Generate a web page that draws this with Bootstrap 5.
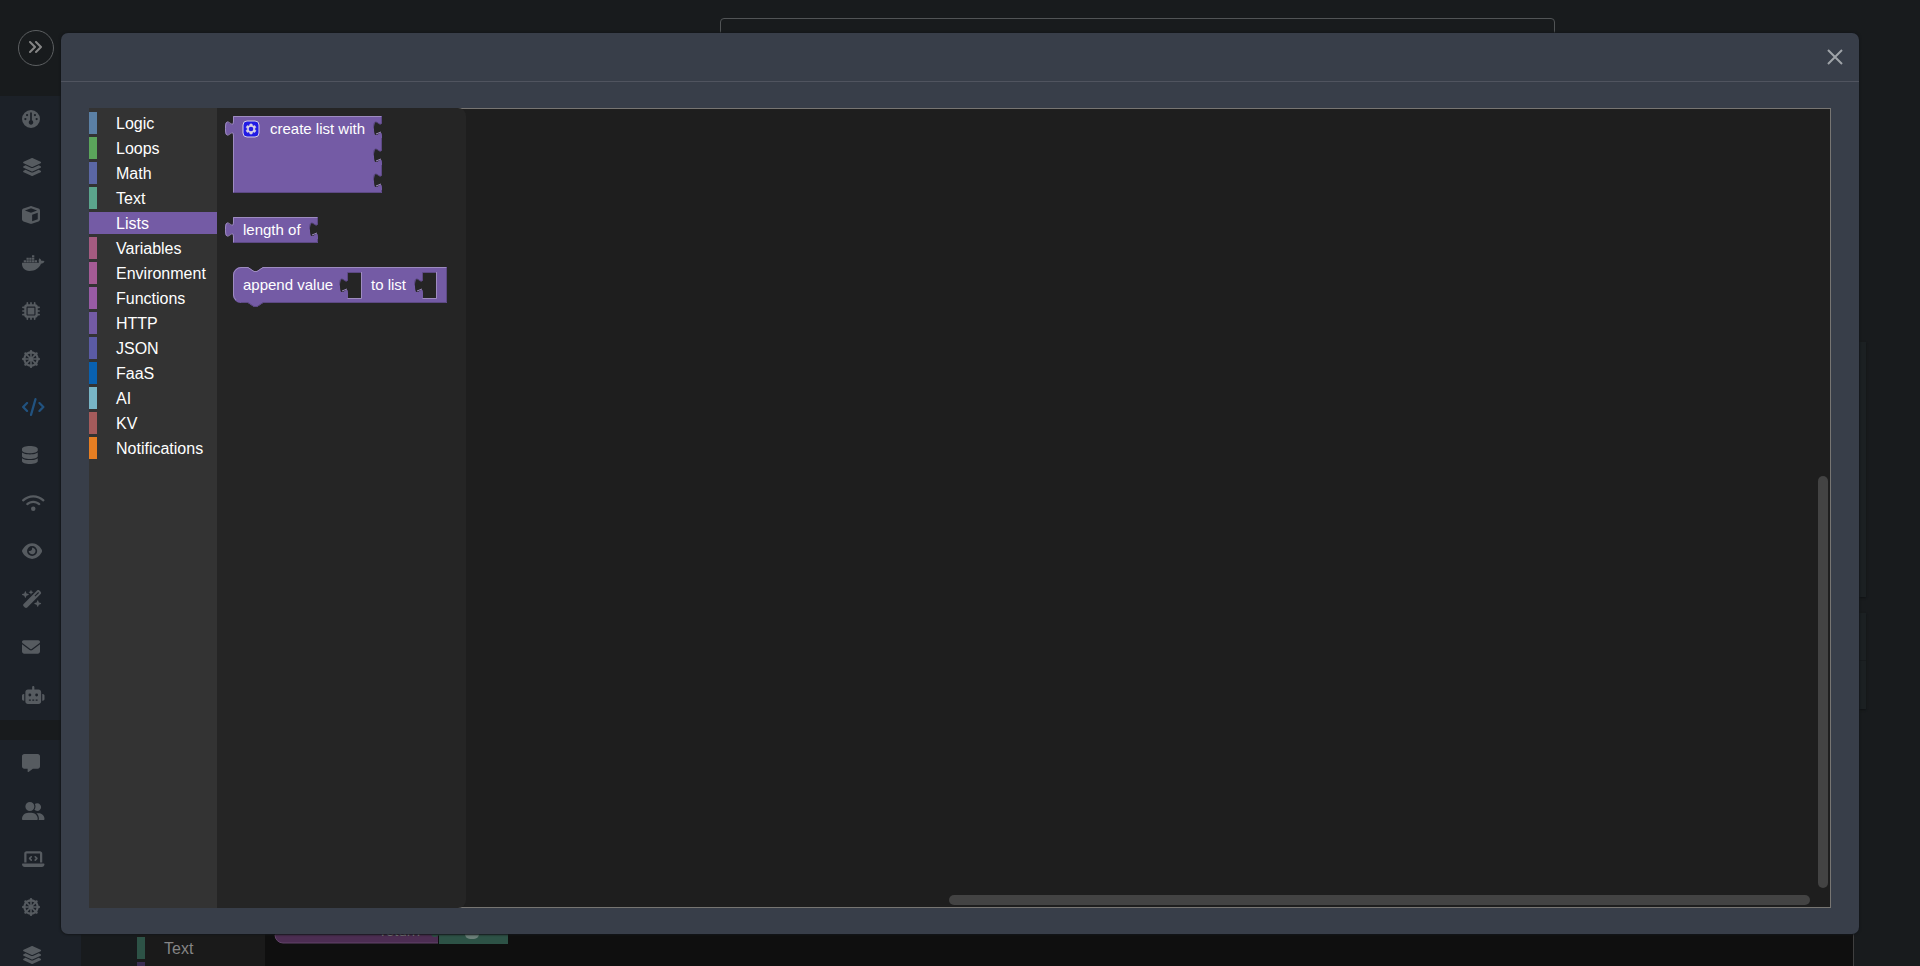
<!DOCTYPE html>
<html lang="en">
<head>
<meta charset="utf-8">
<meta name="viewport" content="width=device-width, initial-scale=1">
<title>Function editor</title>
<link href="https://cdn.jsdelivr.net/npm/bootstrap@5.3.0/dist/css/bootstrap.min.css" rel="stylesheet">
<style>
  body { font-family: "Liberation Sans", Arial, sans-serif; background: #181b1d; color: #fff; }
  .shell { height: 100vh; overflow: hidden; }
  .side { width: 81px; }
  .side-top { height: 96px; padding: 30px 18px; }
  .side-toggle { width: 36px; height: 36px; border: 1px solid #5c5f61; color: #858585; }
  .side-group { background: #1c2128; }
  .side-group.lower { margin-top: 20px; }
  .side-link { height: 48px; padding: 0 22px 2px; color: #565b60; }
  .side-link svg { height: 18px; fill: currentColor; }
  .side-link.active { color: #21527f; }
  .search-box { height: 40px; width: 43.5vw; margin: 18px 19vw 0 auto; background: transparent; border: 1px solid #515456; border-radius: 4px; }
  .back-panel { background: #1b2022; margin-right: 54px; box-shadow: 0 1px 2px #101314; }
  .back-panel.first { height: 255px; margin-top: 284px; }
  .back-panel.second { height: 96px; margin-top: 16px; }
  .back-panel.second hr { margin: 47px 0 0; border-color: #171b1d; opacity: 1; }
  .back-editor { margin: auto 66px 0 56px; height: 33px; border-right: 1px solid #3f3f3f; background: #0f0f0f; }
  .tool-cats { width: 128px; padding-top: 4px; background: #333; }
  .back-editor .tool-cats { background: #1a1a1a; color: #858585; }
  .cat { height: 22px; line-height: 24px; margin-bottom: 3px; padding-left: 19px; border-left: 8px solid var(--hue); font-size: 16px; color: inherit; text-decoration: none; white-space: nowrap; }
  .cat.selected { background: var(--hue); }
  .big-dialog { max-width: none; margin: 33px 61px 32px; height: calc(100vh - 65px); }
  .big-dialog .modal-content { height: 100%; background: #383e49; border: 0; border-radius: 7px; box-shadow: 0 0 2px 1px #14171a; }
  .big-dialog .modal-header { height: 49px; padding: 0 16px; border-bottom: 1px solid #50545f; }
  .close-x { width: 16px; height: 16px; color: #9fa3a8; }
  .big-dialog .modal-body { padding: 26px 28px; }
  .workspace { height: 100%; background: #1e1e1e; box-shadow: inset 0 0 0 1px #777572; }
  .flyout { width: 249px; padding: 8px; gap: 24px; background: #252525; border-radius: 0 8px 8px 0; }
  .flyout svg { overflow: visible; }
  .blk { fill: #745ba5; }
  .hi { fill: none; stroke: #9e8cc0; }
  .lo { fill: none; stroke: #5d4984; }
  .blk-text { font-size: 15px; fill: #fff; }
  .blk-hole { fill: #252525; }
  .bar-v, .bar-h { background: #434343; border-radius: 5px; }
  .bar-v { width: 10px; height: 51.5%; right: 3px; bottom: 20px; }
  .bar-h { height: 10px; width: 49.4%; right: 21px; bottom: 3px; }
</style>
</head>
<body>
<svg class="d-none" aria-hidden="true">
  <symbol id="i-wheel" viewBox="0 0 512 512">
    <g fill="none" stroke="currentColor">
      <circle cx="256" cy="256" r="188" stroke-width="60"/>
      <path stroke-width="44" d="M256 80v352M80 256h352M132 132l248 248M380 132L132 380"/>
      <path stroke-width="72" stroke-linecap="round" d="M256 36v20M256 456v20M36 256h20M456 256h20M100 100l14 14M398 398l14 14M412 100l-14 14M114 398l-14 14"/>
    </g>
    <circle cx="256" cy="256" r="60"/>
  </symbol>
  <symbol id="i-layers" viewBox="0 0 576 512"><path d="M264.5 5.2c14.9-6.9 32.1-6.9 47 0l218.6 101c8.5 3.9 13.9 12.4 13.9 21.8s-5.4 17.9-13.9 21.8l-218.6 101c-14.9 6.9-32.1 6.9-47 0L45.9 149.8C37.4 145.8 32 137.3 32 128s5.4-17.9 13.9-21.8L264.5 5.2zM476.9 209.6l53.2 24.6c8.5 3.9 13.9 12.4 13.9 21.8s-5.4 17.9-13.9 21.8l-218.6 101c-14.9 6.9-32.1 6.9-47 0L45.9 277.8C37.4 273.8 32 265.3 32 256s5.4-17.9 13.9-21.8l53.2-24.6 152 70.2c23.4 10.8 50.4 10.8 73.8 0l152-70.2zm-152 198.2l152-70.2 53.2 24.6c8.5 3.9 13.9 12.4 13.9 21.8s-5.4 17.9-13.9 21.8l-218.6 101c-14.9 6.9-32.1 6.9-47 0L45.9 405.8C37.4 401.8 32 393.3 32 384s5.4-17.9 13.9-21.8l53.2-24.6 152 70.2c23.4 10.8 50.4 10.8 73.8 0z"/></symbol>
</svg>

<div class="shell d-flex">
  <aside class="side d-flex flex-column flex-shrink-0">
    <div class="side-top">
      <button type="button" class="side-toggle btn p-0 rounded-circle d-flex align-items-center justify-content-center" aria-label="Expand sidebar">
        <svg width="14" height="14" viewBox="0 0 14 14" fill="none" stroke="currentColor" stroke-width="2" stroke-linecap="round" stroke-linejoin="round"><path d="M1 1l5 5-5 5M7 1l5 5-5 5"/></svg>
      </button>
    </div>
    <nav class="side-group nav flex-column flex-nowrap mb-0" aria-label="Services">
      <a href="#" class="side-link d-flex align-items-center" aria-label="Dashboard"><svg viewBox="0 0 512 512"><path d="M0 256a256 256 0 1 1 512 0A256 256 0 1 1 0 256zm320 96c0-26.9-16.5-49.9-40-59.3V88c0-13.3-10.7-24-24-24s-24 10.7-24 24V292.7c-23.5 9.5-40 32.5-40 59.3c0 35.3 28.7 64 64 64s64-28.7 64-64zM144 176a32 32 0 1 0 0-64 32 32 0 1 0 0 64zm-16 80a32 32 0 1 0 -64 0 32 32 0 1 0 64 0zm288 32a32 32 0 1 0 0-64 32 32 0 1 0 0 64zM400 144a32 32 0 1 0 -64 0 32 32 0 1 0 64 0z"/></svg></a>
      <a href="#" class="side-link d-flex align-items-center" aria-label="Stacks"><svg viewBox="0 0 576 512"><use href="#i-layers"/></svg></a>
      <a href="#" class="side-link d-flex align-items-center" aria-label="Packages"><svg viewBox="0 0 512 512"><path d="M234.5 5.7c13.9-5 29.1-5 43.1 0l192 68.6C495 83.4 512 107.5 512 134.6V377.4c0 27-17 51.2-42.5 60.3l-192 68.6c-13.9 5-29.1 5-43.1 0l-192-68.6C17 428.6 0 404.5 0 377.4V134.6c0-27 17-51.2 42.5-60.3l192-68.6zM256 66L82.3 128 256 190l173.7-62L256 66zm32 368.6l160-57.1v-188L288 246.6v188z"/></svg></a>
      <a href="#" class="side-link d-flex align-items-center" aria-label="Containers"><svg viewBox="0 0 640 512"><path d="M349.9 236.3h-66.1v-59.4h66.1v59.4zm0-204.3h-66.1v60.7h66.1V32zm78.2 144.8H362v59.4h66.1v-59.4zm-156.3-72.1h-66.1v60.1h66.1v-60.1zm78.1 0h-66.1v60.1h66.1v-60.1zm276.8 100c-14.4-9.7-47.6-13.2-73.1-8.4-3.3-24-16.7-44.9-41.1-63.7l-14-9.3-9.3 14c-18.4 27.8-23.4 73.6-3.7 103.8-8.7 4.7-25.8 11.1-48.4 10.7H2.4c-8.7 50.8 5.8 116.8 44 162.1 37.1 43.9 92.7 66.2 165.4 66.2 157.4 0 273.9-72.5 328.4-204.2 21.4.4 67.6.1 91.3-45.2 1.5-2.5 6.6-13.2 8.5-17.1l-13.3-8.9zm-511.1-27.9h-66v59.4h66.1v-59.4zm78.1 0h-66.1v59.4h66.1v-59.4zm78.1 0h-66.1v59.4h66.1v-59.4zm-78.1-72.1h-66.1v60.1h66.1v-60.1z"/></svg></a>
      <a href="#" class="side-link d-flex align-items-center" aria-label="Compute"><svg viewBox="0 0 512 512"><path d="M176 24c0-13.3-10.7-24-24-24s-24 10.7-24 24V64c-35.3 0-64 28.7-64 64H24c-13.3 0-24 10.7-24 24s10.7 24 24 24H64v56H24c-13.3 0-24 10.7-24 24s10.7 24 24 24H64v56H24c-13.3 0-24 10.7-24 24s10.7 24 24 24H64c0 35.3 28.7 64 64 64v40c0 13.3 10.7 24 24 24s24-10.7 24-24V448h56v40c0 13.3 10.7 24 24 24s24-10.7 24-24V448h56v40c0 13.3 10.7 24 24 24s24-10.7 24-24V448c35.3 0 64-28.7 64-64h40c13.3 0 24-10.7 24-24s-10.7-24-24-24H448V280h40c13.3 0 24-10.7 24-24s-10.7-24-24-24H448V176h40c13.3 0 24-10.7 24-24s-10.7-24-24-24H448c0-35.3-28.7-64-64-64V24c0-13.3-10.7-24-24-24s-24 10.7-24 24V64H280V24c0-13.3-10.7-24-24-24s-24 10.7-24 24V64H176V24zM160 128H352c17.7 0 32 14.3 32 32V352c0 17.7-14.3 32-32 32H160c-17.7 0-32-14.3-32-32V160c0-17.7 14.3-32 32-32zm192 32H160V352H352V160z"/></svg></a>
      <a href="#" class="side-link d-flex align-items-center" aria-label="Clusters"><svg viewBox="0 0 512 512"><use href="#i-wheel"/></svg></a>
      <a href="#" class="side-link active d-flex align-items-center" aria-label="Functions" aria-current="page"><svg viewBox="0 0 640 512"><path d="M392.8 1.2c-17-4.9-34.7 5-39.6 22l-128 448c-4.9 17 5 34.7 22 39.6s34.7-5 39.6-22l128-448c4.9-17-5-34.7-22-39.6zm80.6 120.1c-12.5 12.5-12.5 32.8 0 45.3L562.7 256l-89.4 89.4c-12.5 12.5-12.5 32.8 0 45.3s32.8 12.5 45.3 0l112-112c12.5-12.5 12.5-32.8 0-45.3l-112-112c-12.5-12.5-32.8-12.5-45.3 0zm-306.7 0c-12.5-12.5-32.8-12.5-45.3 0l-112 112c-12.5 12.5-12.5 32.8 0 45.3l112 112c12.5 12.5 32.8 12.5 45.3 0s12.5-32.8 0-45.3L77.3 256l89.4-89.4c12.5-12.5 12.5-32.8 0-45.3z"/></svg></a>
      <a href="#" class="side-link d-flex align-items-center" aria-label="Databases"><svg viewBox="0 0 448 512"><path d="M448 80v48c0 44.2-100.3 80-224 80S0 172.2 0 128V80C0 35.8 100.3 0 224 0S448 35.8 448 80zM393.2 214.7c20.8-7.4 39.9-16.9 54.8-28.6V288c0 44.2-100.3 80-224 80S0 332.2 0 288V186.1c14.9 11.8 34 21.2 54.8 28.6C99.7 230.7 159.5 240 224 240s124.3-9.3 169.2-25.3zM0 346.1c14.9 11.8 34 21.2 54.8 28.6C99.7 390.7 159.5 400 224 400s124.3-9.3 169.2-25.3c20.8-7.4 39.9-16.9 54.8-28.6V432c0 44.2-100.3 80-224 80S0 476.2 0 432V346.1z"/></svg></a>
      <a href="#" class="side-link d-flex align-items-center" aria-label="Network"><svg viewBox="0 0 640 512"><path d="M54.2 202.9C123.2 136.7 216.8 96 320 96s196.8 40.7 265.8 106.9c12.8 12.2 33 11.8 45.2-.9s11.8-33-.9-45.2C549.7 79.5 440.4 32 320 32S90.3 79.5 9.8 156.7C-2.9 169-3.3 189.2 8.9 202s32.5 13.2 45.2 .9zM320 256c56.8 0 108.6 21.1 148.2 56c13.3 11.7 33.5 10.4 45.2-2.8s10.4-33.5-2.8-45.2C459.8 219.2 393 192 320 192s-139.8 27.2-190.5 72c-13.3 11.7-14.5 31.9-2.8 45.2s31.9 14.5 45.2 2.8c39.5-34.9 91.3-56 148.2-56zm64 160a64 64 0 1 0 -128 0 64 64 0 1 0 128 0z"/></svg></a>
      <a href="#" class="side-link d-flex align-items-center" aria-label="Monitoring"><svg viewBox="0 0 576 512"><path d="M288 32c-80.8 0-145.5 36.8-192.6 80.6C48.6 156 17.3 208 2.5 243.7c-3.3 7.9-3.3 16.7 0 24.6C17.3 304 48.6 356 95.4 399.4C142.5 443.2 207.2 480 288 480s145.5-36.8 192.6-80.6c46.8-43.5 78.1-95.4 93-131.1c3.3-7.9 3.3-16.7 0-24.6c-14.9-35.7-46.2-87.7-93-131.1C433.5 68.8 368.8 32 288 32zM144 256a144 144 0 1 1 288 0 144 144 0 1 1 -288 0zm144-64c0 35.3-28.7 64-64 64c-7.1 0-13.9-1.2-20.3-3.3c-5.5-1.8-11.9 1.6-11.7 7.4c.3 6.9 1.3 13.8 3.2 20.7c13.7 51.2 66.4 81.6 117.6 67.9s81.6-66.4 67.9-117.6c-11.1-41.5-47.8-69.4-88.6-71.1c-5.8-.2-9.2 6.1-7.4 11.7c2.1 6.4 3.3 13.2 3.3 20.3z"/></svg></a>
      <a href="#" class="side-link d-flex align-items-center" aria-label="Automation"><svg viewBox="0 0 576 512"><path d="M234.7 42.7L197 56.8c-3 1.1-5 4-5 7.2s2 6.1 5 7.2l37.7 14.1L248.8 123c1.1 3 4 5 7.2 5s6.1-2 7.2-5l14.1-37.7L315 71.2c3-1.1 5-4 5-7.2s-2-6.1-5-7.2L277.3 42.7 263.2 5c-1.1-3-4-5-7.2-5s-6.1 2-7.2 5L234.7 42.7zM46.1 395.4c-18.7 18.7-18.7 49.1 0 67.9l34.6 34.6c18.7 18.7 49.1 18.7 67.9 0L529.9 116.5c18.7-18.7 18.7-49.1 0-67.9L495.3 14.1c-18.7-18.7-49.1-18.7-67.9 0L46.1 395.4zM484.6 82.6l-105 105-23.3-23.3 105-105 23.3 23.3zM7.5 117.2C3 118.9 0 123.2 0 128s3 9.1 7.5 10.8L64 160l21.2 56.5c1.7 4.5 6 7.5 10.8 7.5s9.1-3 10.8-7.5L128 160l56.5-21.2c4.5-1.7 7.5-6 7.5-10.8s-3-9.1-7.5-10.8L128 96 106.8 39.5C105.1 35 100.8 32 96 32s-9.1 3-10.8 7.5L64 96 7.5 117.2zm352 256c-4.5 1.7-7.5 6-7.5 10.8s3 9.1 7.5 10.8L416 416l21.2 56.5c1.7 4.5 6 7.5 10.8 7.5s9.1-3 10.8-7.5L480 416l56.5-21.2c4.5-1.7 7.5-6 7.5-10.8s-3-9.1-7.5-10.8L480 352l-21.2-56.5c-1.7-4.5-6-7.5-10.8-7.5s-9.1 3-10.8 7.5L416 352l-56.5 21.2z"/></svg></a>
      <a href="#" class="side-link d-flex align-items-center" aria-label="Mail"><svg viewBox="0 0 512 512"><path d="M48 64C21.5 64 0 85.5 0 112c0 15.1 7.1 29.3 19.2 38.4L236.8 313.6c11.4 8.5 27 8.5 38.4 0L492.8 150.4c12.1-9.1 19.2-23.3 19.2-38.4c0-26.5-21.5-48-48-48H48zM0 176V384c0 35.3 28.7 64 64 64H448c35.3 0 64-28.7 64-64V176L294.4 339.2c-22.8 17.1-54 17.1-76.8 0L0 176z"/></svg></a>
      <a href="#" class="side-link d-flex align-items-center" aria-label="Assistants"><svg viewBox="0 0 640 512"><path d="M320 0c17.7 0 32 14.3 32 32V96H472c39.8 0 72 32.2 72 72V440c0 39.8-32.2 72-72 72H168c-39.8 0-72-32.2-72-72V168c0-39.8 32.2-72 72-72H288V32c0-17.7 14.3-32 32-32zM208 384c-8.8 0-16 7.2-16 16s7.2 16 16 16h32c8.8 0 16-7.2 16-16s-7.2-16-16-16H208zm96 0c-8.8 0-16 7.2-16 16s7.2 16 16 16h32c8.8 0 16-7.2 16-16s-7.2-16-16-16H304zm96 0c-8.8 0-16 7.2-16 16s7.2 16 16 16h32c8.8 0 16-7.2 16-16s-7.2-16-16-16H400zM264 256a40 40 0 1 0 -80 0 40 40 0 1 0 80 0zm152 40a40 40 0 1 0 0-80 40 40 0 1 0 0 80zM48 224H64V416H48c-26.5 0-48-21.5-48-48V272c0-26.5 21.5-48 48-48zm544 0c26.5 0 48 21.5 48 48v96c0 26.5-21.5 48-48 48H576V224h16z"/></svg></a>
    </nav>
    <nav class="side-group lower nav flex-column flex-nowrap flex-shrink-0" aria-label="Account">
      <a href="#" class="side-link d-flex align-items-center" aria-label="Messages"><svg viewBox="0 0 512 512"><path d="M64 0C28.7 0 0 28.7 0 64V352c0 35.3 28.7 64 64 64h96v80c0 6.1 3.4 11.6 8.8 14.3s11.9 2.1 16.8-1.5L309.3 416H448c35.3 0 64-28.7 64-64V64c0-35.3-28.7-64-64-64H64z"/></svg></a>
      <a href="#" class="side-link d-flex align-items-center" aria-label="Users"><svg viewBox="0 0 640 512"><path d="M96 128a128 128 0 1 1 256 0A128 128 0 1 1 96 128zM0 482.3C0 383.8 79.8 304 178.3 304h91.4C368.2 304 448 383.8 448 482.3c0 16.4-13.3 29.7-29.7 29.7H29.7C13.3 512 0 498.7 0 482.3zM609.3 512H471.4c5.4-9.4 8.6-20.3 8.6-32v-8c0-60.7-27.1-115.2-69.8-151.8c2.4-.1 4.7-.2 7.1-.2h61.4C567.8 320 640 392.2 640 481.3c0 17-13.8 30.7-30.7 30.7zM432 256c-31 0-59-12.6-79.3-32.9C372.4 196.5 384 163.6 384 128c0-26.8-6.6-52.1-18.3-74.3C384.3 40.1 407.2 32 432 32c61.9 0 112 50.1 112 112s-50.1 112-112 112z"/></svg></a>
      <a href="#" class="side-link d-flex align-items-center" aria-label="Developer"><svg viewBox="0 0 640 512"><path d="M64 96c0-35.3 28.7-64 64-64H512c35.3 0 64 28.7 64 64V352H512V96H128V352H64V96zM0 403.2C0 392.6 8.6 384 19.2 384H620.8c10.6 0 19.2 8.6 19.2 19.2c0 42.4-34.4 76.8-76.8 76.8H76.8C34.4 480 0 445.6 0 403.2zM281 209l-31 31 31 31c9.4 9.4 9.4 24.6 0 33.9s-24.6 9.4-33.9 0l-48-48c-9.4-9.4-9.4-24.6 0-33.9l48-48c9.4-9.4 24.6-9.4 33.9 0s9.4 24.6 0 33.9zM393 175l48 48c9.4 9.4 9.4 24.6 0 33.9l-48 48c-9.4 9.4-24.6 9.4-33.9 0s-9.4-24.6 0-33.9l31-31-31-31c-9.4-9.4-9.4-24.6 0-33.9s24.6-9.4 33.9 0z"/></svg></a>
      <a href="#" class="side-link d-flex align-items-center" aria-label="Cluster settings"><svg viewBox="0 0 512 512"><use href="#i-wheel"/></svg></a>
      <a href="#" class="side-link d-flex align-items-center" aria-label="Stack settings"><svg viewBox="0 0 576 512"><use href="#i-layers"/></svg></a>
    </nav>
  </aside>

  <main class="flex-grow-1 d-flex flex-column">
    <input type="search" class="search-box d-block flex-shrink-0" aria-label="Search">
    <section class="back-panel first flex-shrink-0"></section>
    <section class="back-panel second flex-shrink-0"><hr></section>
    <!-- inline editor, cut off by the bottom of the window -->
    <section class="back-editor d-flex flex-shrink-0">
      <div class="tool-cats d-flex flex-column flex-shrink-0 overflow-hidden">
        <a href="#" class="cat flex-shrink-0" style="--hue:#2d5246">Text</a>
        <span class="cat flex-shrink-0" style="--hue:#3a2d52"></span>
      </div>
      <svg width="260" height="33" viewBox="0 0 260 33" class="flex-shrink-0 overflow-visible">
        <path d="M10 0v2a8 8 0 0 0 8 8h155v-10z" fill="#4c2d52"/>
        <path d="M174 11V0h69v11zM174 0v2c-3 3-8 3-8-2z" fill="#2d5246"/>
        <path d="M10 2a8 8 0 0 0 8 8h155" fill="none" stroke="#63456a"/>
        <rect x="200" y="-8" width="14" height="14" rx="5" fill="#6b7f79"/>
        <text x="116" y="3" font-size="15" fill="#858585">return</text>
      </svg>
    </section>
  </main>
</div>

<div class="modal d-block" role="dialog" aria-modal="true" aria-label="Block editor">
  <div class="modal-dialog big-dialog">
    <div class="modal-content">
      <div class="modal-header d-flex justify-content-end align-items-center">
        <button type="button" class="close-x btn p-0 border-0 d-flex" aria-label="Close">
          <svg width="16" height="16" viewBox="0 0 16 16" stroke="currentColor" stroke-width="2"><path d="M1 1l14 14M15 1L1 15"/></svg>
        </button>
      </div>
      <div class="modal-body">
        <div class="workspace d-flex position-relative">
          <nav class="tool-cats d-flex flex-column flex-shrink-0" aria-label="Block categories">
            <a href="#" class="cat" style="--hue:#5b80a5">Logic</a>
            <a href="#" class="cat" style="--hue:#5ba55b">Loops</a>
            <a href="#" class="cat" style="--hue:#5b67a5">Math</a>
            <a href="#" class="cat" style="--hue:#5ba58c">Text</a>
            <a href="#" class="cat selected" style="--hue:#745ba5">Lists</a>
            <a href="#" class="cat" style="--hue:#a55b80">Variables</a>
            <a href="#" class="cat" style="--hue:#a55b95">Environment</a>
            <a href="#" class="cat" style="--hue:#995ba5">Functions</a>
            <a href="#" class="cat" style="--hue:#745ba5">HTTP</a>
            <a href="#" class="cat" style="--hue:#5b5ba5">JSON</a>
            <a href="#" class="cat" style="--hue:#0961b0">FaaS</a>
            <a href="#" class="cat" style="--hue:#78b5c6">AI</a>
            <a href="#" class="cat" style="--hue:#a55b5b">KV</a>
            <a href="#" class="cat" style="--hue:#e67e22">Notifications</a>
          </nav>
          <div class="flyout d-flex flex-column flex-shrink-0">
            <svg width="160" height="77" viewBox="0 0 160 77">
              <path class="blk" d="M8 0H157V5c0 10-8-8-8 7.500s8-2.500 8 7.500V32c0 10-8-8-8 7.500s8-2.500 8 7.500V57c0 10-8-8-8 7.500s8-2.500 8 7.500V77H8V20c0-10-8 8-8-7.500s8 2.500 8-7.500z"/>
              <path class="lo" d="M156.500 1V5c0 10-8-8-8 7.500M156.500 22V32c0 10-8-8-8 7.500M156.500 49V57c0 10-8-8-8 7.500M156.500 74V76.500H9"/>
              <path class="hi" d="M151 18l5-2M151 45l5-2M151 70l5-2M8.500 76V20c0-10-8 8-8-7.500s8 2.500 8-7.500V.5H156"/>
              <g transform="translate(18 5)" opacity=".7">
                <rect width="16" height="16" rx="4" fill="#00f" stroke="#fff"/>
                <path fill="#fff" stroke="#fff" stroke-width=".5" d="m4.203,7.296 0,1.368 -0.92,0.677 -0.11,0.41 0.9,1.559 0.41,0.11 1.043,-0.457 1.187,0.683 0.127,1.134 0.3,0.3 1.8,0 0.3,-0.299 0.127,-1.138 1.185,-0.682 1.046,0.458 0.409,-0.11 0.9,-1.559 -0.11,-0.41 -0.92,-0.677 0,-1.366 0.92,-0.677 0.11,-0.41 -0.9,-1.559 -0.409,-0.109 -1.046,0.458 -1.185,-0.682 -0.127,-1.138 -0.3,-0.299 -1.8,0 -0.3,0.3 -0.126,1.135 -1.187,0.682 -1.043,-0.457 -0.41,0.11 -0.899,1.559 0.108,0.409z"/>
                <circle cx="8" cy="8" r="2.300" fill="#00f"/>
              </g>
              <text class="blk-text" x="45" y="18">create list with</text>
            </svg>
            <svg width="100" height="26" viewBox="0 0 100 26">
              <path class="blk" d="M8 0H93V5c0 10-8-8-8 7.500s8-2.500 8 7.500V26H8V20c0-10-8 8-8-7.500s8 2.500 8-7.500z"/>
              <path class="lo" d="M92.500 1V5c0 10-8-8-8 7.500M92.500 22V25.500H9"/>
              <path class="hi" d="M87 18l5-2M8.500 25V20c0-10-8 8-8-7.500s8 2.500 8-7.500V.5H92"/>
              <text class="blk-text" x="18" y="18">length of</text>
            </svg>
            <svg width="224" height="40" viewBox="0 0 224 40">
              <path class="blk" d="M8 8A8 8 0 0 1 16 0H23l6 4h3l6-4H222V36H38l-6 4h-3l-6-4H16A8 8 0 0 1 8 28z"/>
              <path class="lo" d="M221.500 1V35.500H38l-6 4h-3l-6-4H16"/>
              <path class="hi" d="M11 33A8 8 0 0 1 8.500 28V8A8 8 0 0 1 16 .5H23l6 4h3l6-4H221"/>
              <path class="blk-hole" d="M123 6h13v25h-13V26c0-10-8 8-8-7.500s8 2.500 8-7.500zM198 6h13v25h-13V26c0-10-8 8-8-7.500s8 2.500 8-7.500z"/>
              <path class="lo" d="M136 5.500H122.500V11c0 10-8-8-8 7.500M211 5.500H197.500V11c0 10-8-8-8 7.500"/>
              <path class="hi" d="M117 24l5-2M122.500 31.500H136.500V5M192 24l5-2M197.500 31.500H211.500V5"/>
              <text class="blk-text" x="18" y="23">append value</text>
              <text class="blk-text" x="146" y="23">to list</text>
            </svg>
          </div>
          <div class="bar-v position-absolute"></div>
          <div class="bar-h position-absolute"></div>
        </div>
      </div>
    </div>
  </div>
</div>
<script src="https://cdn.jsdelivr.net/npm/bootstrap@5.3.0/dist/js/bootstrap.bundle.min.js"></script>
</body>
</html>
